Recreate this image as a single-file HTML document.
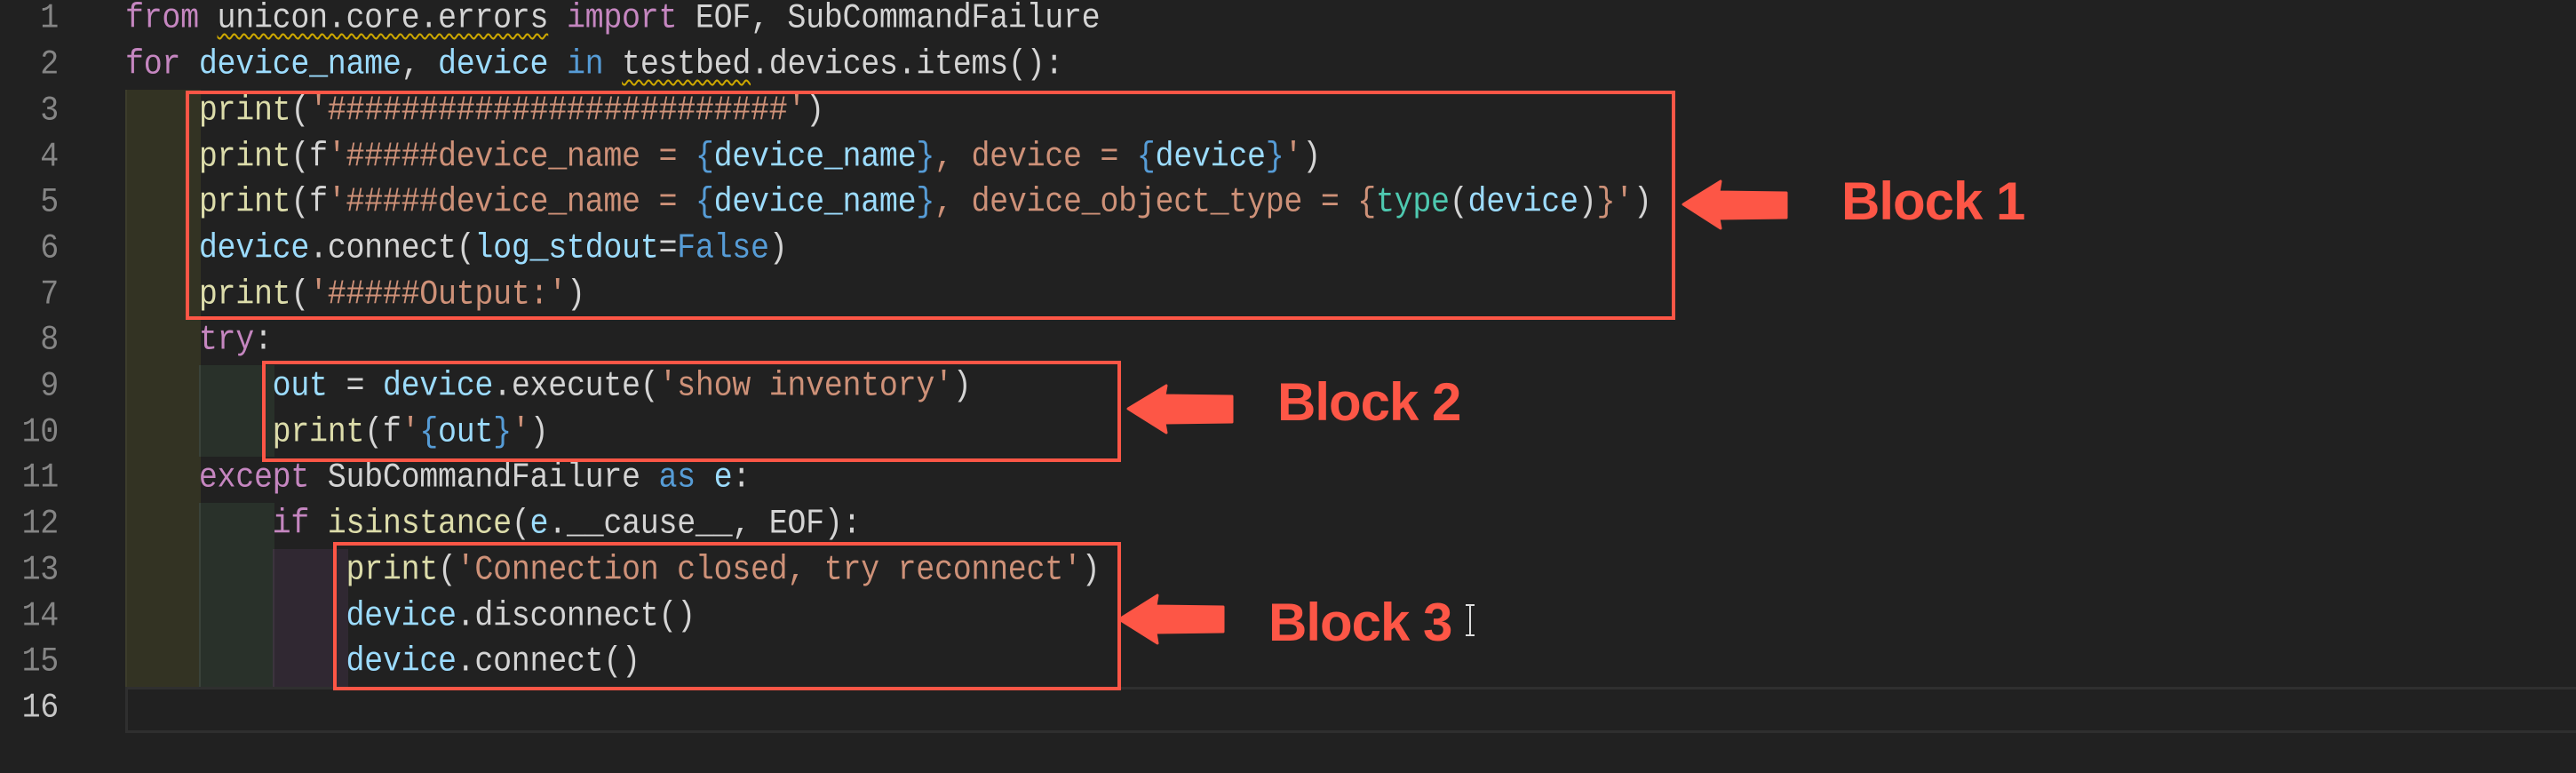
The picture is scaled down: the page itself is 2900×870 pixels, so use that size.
<!DOCTYPE html>
<html><head><meta charset="utf-8"><style>
html,body{margin:0;padding:0;background:#212121;width:2900px;height:870px;overflow:hidden;position:relative}
.ln{position:absolute;left:0;width:66px;text-align:right;font:35px "Liberation Mono",monospace;color:#858585;line-height:51.7px;letter-spacing:-0.3px;transform:scaleY(1.12);transform-origin:0 38px}
.cl{position:absolute;left:141px;font:35px "Liberation Mono",monospace;color:#d4d4d4;line-height:51.7px;letter-spacing:-0.3px;white-space:pre;transform:scaleY(1.12);transform-origin:0 38px}
.k{color:#c586c0}.v{color:#9cdcfe}.f{color:#dcdcaa}.s{color:#ce9178}.b{color:#569cd6}.t{color:#4ec9b0}
.sq{text-decoration:underline wavy #cca700;text-decoration-thickness:2px;text-underline-offset:6px}
.band{position:absolute}
.box{position:absolute;border:4px solid #fd5646;box-sizing:border-box}
.lbl{position:absolute;font:bold 60px "Liberation Sans",sans-serif;color:#fd5646;letter-spacing:-1px;line-height:60px}
</style></head><body>
<div class="band" style="left:141px;top:101px;width:83px;height:672px;background:#333323;border-left:2px solid #3d3d2c"></div>
<div class="band" style="left:224px;top:411px;width:83px;height:103px;background:#29312a;border-left:2px solid #3a423a"></div>
<div class="band" style="left:224px;top:566px;width:83px;height:207px;background:#29312a;border-left:2px solid #3a423a"></div>
<div class="band" style="left:307px;top:618px;width:83px;height:155px;background:#302832;border-left:2px solid #3c343e"></div>
<div style="position:absolute;left:141px;top:773px;right:0;height:52px;border:3px solid #2f2f2f;border-right:none;box-sizing:border-box"></div>

<div class="ln" style="top:-2.6px">1</div>
<div class="ln" style="top:49.1px">2</div>
<div class="ln" style="top:100.8px">3</div>
<div class="ln" style="top:152.5px">4</div>
<div class="ln" style="top:204.2px">5</div>
<div class="ln" style="top:255.9px">6</div>
<div class="ln" style="top:307.6px">7</div>
<div class="ln" style="top:359.3px">8</div>
<div class="ln" style="top:411px">9</div>
<div class="ln" style="top:462.7px">10</div>
<div class="ln" style="top:514.4px">11</div>
<div class="ln" style="top:566.1px">12</div>
<div class="ln" style="top:617.8px">13</div>
<div class="ln" style="top:669.5px">14</div>
<div class="ln" style="top:721.2px">15</div>
<div class="ln" style="top:772.9px;color:#c6c6c6">16</div>

<div class="cl" style="top:-2.6px"><span class="k">from</span> <span class="sq">unicon.core.errors</span> <span class="k">import</span> EOF, SubCommandFailure</div>
<div class="cl" style="top:49.1px"><span class="k">for</span> <span class="v">device_name</span>, <span class="v">device</span> <span class="b">in</span> <span class="sq">testbed</span>.devices.items():</div>
<div class="cl" style="top:100.8px">    <span class="f">print</span>(<span class="s">'#########################'</span>)</div>
<div class="cl" style="top:152.5px">    <span class="f">print</span>(f<span class="s">'#####device_name = </span><span class="b">{</span><span class="v">device_name</span><span class="b">}</span><span class="s">, device = </span><span class="b">{</span><span class="v">device</span><span class="b">}</span><span class="s">'</span>)</div>
<div class="cl" style="top:204.2px">    <span class="f">print</span>(f<span class="s">'#####device_name = </span><span class="b">{</span><span class="v">device_name</span><span class="b">}</span><span class="s">, device_object_type = {</span><span class="t">type</span>(<span class="v">device</span>)<span class="s">}'</span>)</div>
<div class="cl" style="top:255.9px">    <span class="v">device</span>.connect(<span class="v">log_stdout</span>=<span class="b">False</span>)</div>
<div class="cl" style="top:307.6px">    <span class="f">print</span>(<span class="s">'#####Output:'</span>)</div>
<div class="cl" style="top:359.3px">    <span class="k">try</span>:</div>
<div class="cl" style="top:411px">        <span class="v">out</span> = <span class="v">device</span>.execute(<span class="s">'show inventory'</span>)</div>
<div class="cl" style="top:462.7px">        <span class="f">print</span>(f<span class="s">'</span><span class="b">{</span><span class="v">out</span><span class="b">}</span><span class="s">'</span>)</div>
<div class="cl" style="top:514.4px">    <span class="k">except</span> SubCommandFailure <span class="b">as</span> <span class="v">e</span>:</div>
<div class="cl" style="top:566.1px">        <span class="k">if</span> <span class="f">isinstance</span>(<span class="v">e</span>.__cause__, EOF):</div>
<div class="cl" style="top:617.8px">            <span class="f">print</span>(<span class="s">'Connection closed, try reconnect'</span>)</div>
<div class="cl" style="top:669.5px">            <span class="v">device</span>.disconnect()</div>
<div class="cl" style="top:721.2px">            <span class="v">device</span>.connect()</div>

<div class="box" style="left:209px;top:102px;width:1677px;height:258px"></div>
<div class="box" style="left:295px;top:406px;width:967px;height:114px"></div>
<div class="box" style="left:375px;top:610px;width:887px;height:167px"></div>

<svg style="position:absolute;left:0;top:0" width="2900" height="870">
<polygon fill="#fd5646" stroke="#fd5646" stroke-width="3" stroke-linejoin="round" points="1895,230 1937,204 1935,216 2011,217 2011,245 1935,246 1937,257"/>
<polygon fill="#fd5646" stroke="#fd5646" stroke-width="3" stroke-linejoin="round" points="1270,460 1313,434 1311,445 1387,446 1387,475 1311,476 1313,487"/>
<polygon fill="#fd5646" stroke="#fd5646" stroke-width="3" stroke-linejoin="round" points="1260,697 1303,670 1301,682 1377,683 1377,711 1301,712 1303,724"/>
<path d="M1650,681 h10 M1655,681 v34 M1650,715 h10" stroke="#ddd" stroke-width="2" fill="none"/>
</svg>
<div class="lbl" style="left:2073px;top:197px">Block 1</div>
<div class="lbl" style="left:1438px;top:423px">Block 2</div>
<div class="lbl" style="left:1428px;top:671px">Block 3</div>
</body></html>
